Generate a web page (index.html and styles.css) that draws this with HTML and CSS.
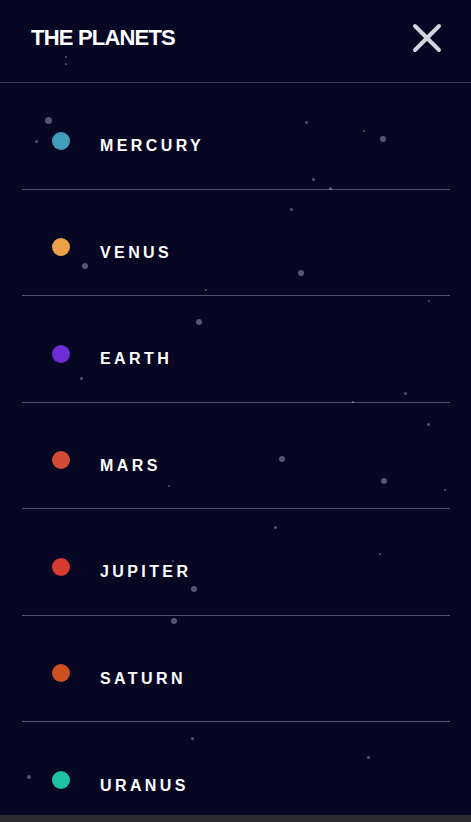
FILE: index.html
```html
<!DOCTYPE html>
<html lang="en">
<head>
<meta charset="utf-8">
<title>The Planets</title>
<link rel="stylesheet" href="styles.css">
</head>
<body>
<div class="sky" aria-hidden="true">
  <span class="star" style="left:65px;top:56px;width:2px;height:2px"></span>
  <span class="star" style="left:65px;top:63px;width:2px;height:2px"></span>
  <span class="star" style="left:45px;top:117px;width:7px;height:7px"></span>
  <span class="star" style="left:35px;top:140px;width:3px;height:3px"></span>
  <span class="star" style="left:305px;top:121px;width:3px;height:3px"></span>
  <span class="star" style="left:363px;top:130px;width:2px;height:2px"></span>
  <span class="star" style="left:380px;top:136px;width:6px;height:6px"></span>
  <span class="star" style="left:312px;top:178px;width:3px;height:3px"></span>
  <span class="star" style="left:329px;top:187px;width:3px;height:3px"></span>
  <span class="star" style="left:290px;top:208px;width:3px;height:3px"></span>
  <span class="star" style="left:298px;top:270px;width:6px;height:6px"></span>
  <span class="star" style="left:82px;top:263px;width:6px;height:6px"></span>
  <span class="star" style="left:205px;top:289px;width:2px;height:2px"></span>
  <span class="star" style="left:196px;top:319px;width:6px;height:6px"></span>
  <span class="star" style="left:428px;top:300px;width:2px;height:2px"></span>
  <span class="star" style="left:80px;top:377px;width:3px;height:3px"></span>
  <span class="star" style="left:404px;top:392px;width:3px;height:3px"></span>
  <span class="star" style="left:352px;top:401px;width:2px;height:2px"></span>
  <span class="star" style="left:427px;top:423px;width:3px;height:3px"></span>
  <span class="star" style="left:279px;top:456px;width:6px;height:6px"></span>
  <span class="star" style="left:381px;top:478px;width:6px;height:6px"></span>
  <span class="star" style="left:168px;top:485px;width:2px;height:2px"></span>
  <span class="star" style="left:444px;top:489px;width:2px;height:2px"></span>
  <span class="star" style="left:274px;top:526px;width:3px;height:3px"></span>
  <span class="star" style="left:379px;top:553px;width:2px;height:2px"></span>
  <span class="star" style="left:172px;top:560px;width:2px;height:2px"></span>
  <span class="star" style="left:191px;top:586px;width:6px;height:6px"></span>
  <span class="star" style="left:171px;top:618px;width:6px;height:6px"></span>
  <span class="star" style="left:191px;top:737px;width:3px;height:3px"></span>
  <span class="star" style="left:367px;top:756px;width:3px;height:3px"></span>
  <span class="star" style="left:27px;top:775px;width:4px;height:4px"></span>
</div>

<header class="topbar">
  <h1 class="brand">THE PLANETS</h1>
  <button class="close" type="button" aria-label="Close menu">
    <svg width="30" height="30" viewBox="0 0 30 30">
      <path d="M3 3 L27 27 M27 3 L3 27" stroke="#d4d4dc" stroke-width="4" stroke-linecap="round" fill="none"/>
    </svg>
  </button>
</header>

<nav class="menu">
  <ul class="list">
    <li class="item"><span class="dot mercury"></span><span class="label">MERCURY</span></li>
    <li class="item"><span class="dot venus"></span><span class="label">VENUS</span></li>
    <li class="item"><span class="dot earth"></span><span class="label">EARTH</span></li>
    <li class="item"><span class="dot mars"></span><span class="label">MARS</span></li>
    <li class="item"><span class="dot jupiter"></span><span class="label">JUPITER</span></li>
    <li class="item"><span class="dot saturn"></span><span class="label">SATURN</span></li>
    <li class="item last"><span class="dot uranus"></span><span class="label">URANUS</span></li>
  </ul>
</nav>

<div class="hscroll" aria-hidden="true"></div>
</body>
</html>
```

FILE: styles.css
```css
html, body {
  margin: 0;
  padding: 0;
  height: 100%;
  overflow: hidden;
}

body {
  background: #070724;
  color: #ffffff;
  font-family: "Liberation Sans", Arial, sans-serif;
  position: relative;
}

.sky {
  position: absolute;
  inset: 0;
  pointer-events: none;
  z-index: 0;
}

.star {
  position: absolute;
  border-radius: 50%;
  background: rgba(150, 150, 175, 0.55);
}

.topbar {
  position: relative;
  z-index: 1;
  box-sizing: border-box;
  height: 83px;
  padding: 0 29px 6px 31px;
  display: flex;
  align-items: center;
  justify-content: space-between;
  border-bottom: 1px solid rgba(255, 255, 255, 0.2);
}

.brand {
  margin: 0;
  font-size: 22px;
  line-height: 1;
  font-weight: 700;
  letter-spacing: -0.8px;
  color: #ffffff;
}

.close {
  background: none;
  border: 0;
  padding: 0;
  margin: 0;
  width: 30px;
  height: 30px;
  display: flex;
  cursor: pointer;
}

.menu {
  position: relative;
  z-index: 1;
  margin: 0 21px 0 22px;
}

.list {
  list-style: none;
  margin: 0;
  padding: 0;
}

.item {
  box-sizing: border-box;
  height: 106.5px;
  padding: 10px 0 0 30px;
  display: flex;
  align-items: center;
  gap: 30px;
  border-bottom: 1px solid rgba(255, 255, 255, 0.3);
}

.item.last {
  border-bottom: 0;
}

.dot {
  width: 18px;
  height: 18px;
  border-radius: 50%;
  flex: none;
}

.mercury { background: #419ebb; }
.venus { background: #eda249; }
.earth { background: #6d2ed5; }
.mars { background: #d14c32; }
.jupiter { background: #d83a34; }
.saturn { background: #cd5120; }
.uranus { background: #1ec1a2; }

.label {
  margin-top: 11px;
  font-size: 16px;
  line-height: 1;
  font-weight: 700;
  letter-spacing: 3.4px;
  color: #ffffff;
}

.hscroll {
  position: fixed;
  left: 0;
  right: 0;
  bottom: 0;
  height: 7px;
  background: #2c2c2e;
  z-index: 2;
}
```
